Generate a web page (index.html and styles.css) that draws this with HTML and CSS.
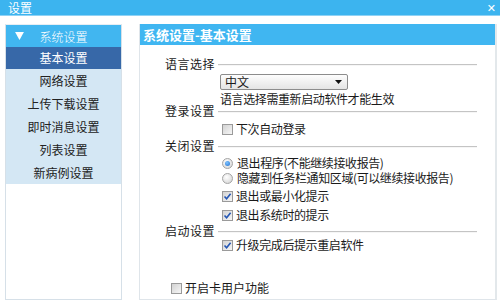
FILE: index.html
```html
<!DOCTYPE html>
<html>
  <head>
    <meta charset="utf-8" />
    <link rel="stylesheet" href="styles.css">
  </head>
  <body>
    <div class="titlebar">
      <div class="title">设置</div>
      <div class="close">✕</div>
    </div>

    <div class="main">
      <div class="sidebar">
        <div class="side-head">
          <span class="tri">
            <svg viewBox="0 0 10 9"><path d="M0 0H10L5 9Z" fill="#fff" /></svg>
          </span>
          <span class="side-title">系统设置</span>
        </div>
        <ul class="menu">
          <li class="active">基本设置</li>
          <li>网络设置</li>
          <li>上传下载设置</li>
          <li>即时消息设置</li>
          <li>列表设置</li>
          <li>新病例设置</li>
        </ul>
      </div>

      <div class="panel">
        <div class="panel-head">系统设置-基本设置</div>
        <div class="panel-body">
          <div class="legend l-lang"><span>语言选择</span><i class="rule"></i></div>
          <div class="items">
            <div class="select">
              <span>中文</span>
              <svg class="caret" viewBox="0 0 7 4"><path d="M0 0H7L3.5 4Z" fill="#111" /></svg>
            </div>
            <div class="note">语言选择需重新启动软件才能生效</div>
          </div>

          <div class="legend l-login"><span>登录设置</span><i class="rule"></i></div>
          <div class="items">
            <div class="opt o-login"><span class="box"></span>下次自动登录</div>
          </div>

          <div class="legend l-close"><span>关闭设置</span><i class="rule"></i></div>
          <div class="items">
            <div class="opt o-r1"><span class="radio on"></span>退出程序(不能继续接收报告)</div>
            <div class="opt o-r2"><span class="radio"></span>隐藏到任务栏通知区域(可以继续接收报告)</div>
            <div class="opt o-c1">
              <span class="box"><svg viewBox="0 0 9 9"><path d="M1.5 4.5L3.6 6.8L7.6 1.8" /></svg></span>退出或最小化提示
            </div>
            <div class="opt o-c2">
              <span class="box"><svg viewBox="0 0 9 9"><path d="M1.5 4.5L3.6 6.8L7.6 1.8" /></svg></span>退出系统时的提示
            </div>
          </div>

          <div class="legend l-start"><span>启动设置</span><i class="rule"></i></div>
          <div class="items">
            <div class="opt o-start">
              <span class="box"><svg viewBox="0 0 9 9"><path d="M1.5 4.5L3.6 6.8L7.6 1.8" /></svg></span>升级完成后提示重启软件
            </div>
          </div>

          <div class="opt o-card"><span class="box"></span>开启卡用户功能</div>
        </div>
      </div>
    </div>
  </body>
</html>
```

FILE: styles.css
```css
* {
  margin: 0;
  padding: 0;
  box-sizing: border-box;
}

body {
  width: 500px;
  height: 300px;
  overflow: hidden;
  background: #fff;
  font-family: "Noto Sans CJK SC", "DejaVu Sans", sans-serif;
  font-size: 12px;
  color: #1a1a1a;
}

.titlebar {
  height: 16px;
  background: #3cb4ef;
  border-bottom: 1px solid #8fd2f5;
  display: flex;
  justify-content: space-between;
  align-items: center;
  padding: 0 4px 0 8px;
  color: #fff;
}

.title {
  font-size: 12px;
  line-height: 15px;
}

.close {
  font-size: 11px;
  font-weight: bold;
  line-height: 15px;
}

.main {
  display: flex;
  gap: 17px;
  padding: 8px 3px 0 5px;
  height: 284px;
}

/* left menu */
.sidebar {
  width: 117px;
  border: 1px solid #d6e0e8;
  border-top-color: #e6eef4;
  background: #fff;
}

.side-head {
  height: 22px;
  background: #41b6f0;
  color: #fff;
  display: flex;
  align-items: center;
  justify-content: center;
  position: relative;
}

.tri {
  position: absolute;
  left: 9px;
  top: 7px;
  width: 9px;
  height: 8px;
  display: flex;
}

.tri svg {
  width: 9px;
  height: 8px;
}

.side-title {
  font-size: 12px;
  font-weight: 300;
}

.menu {
  list-style: none;
  background: #d4e7f4;
}

.menu li {
  height: 23px;
  line-height: 23px;
  text-align: center;
  color: #222;
}

.menu li.active {
  height: 22px;
  line-height: 22px;
  background: #3768a8;
  color: #fff;
}

/* right panel */
.panel {
  flex: 1;
  border: 1px solid #dfe5ea;
  border-right: 2px solid #e3e8eb;
  border-top: none;
}

.panel-head {
  height: 21px;
  line-height: 21px;
  background: #40b6f1;
  color: #fff;
  font-size: 13px;
  font-weight: bold;
  padding-left: 3px;
}

.panel-body {
  padding: 12px 18px 0 25px;
}

.legend {
  display: flex;
  align-items: center;
  height: 14px;
  line-height: 14px;
}

.legend span {
  width: 53px;
  letter-spacing: 0.5px;
}

.rule {
  flex: 1;
  height: 2px;
  border-top: 1px solid #c4c4c4;
  border-bottom: 1px solid #f6f6f6;
  margin-top: 2px;
}

.items {
  padding-left: 55px;
  letter-spacing: -0.4px;
}

.select {
  margin-top: 3px;
  width: 128px;
  height: 16px;
  border: 1px solid #8c8c8c;
  border-radius: 2px;
  background: linear-gradient(#fdfdfd, #e4e4e4);
  display: flex;
  align-items: center;
  justify-content: space-between;
  padding: 0 5px 0 4px;
  line-height: 14px;
  letter-spacing: 0;
}

.caret {
  width: 7px;
  height: 4px;
}

.note {
  margin-top: 3px;
  line-height: 12px;
}

.opt {
  display: flex;
  align-items: center;
  height: 14px;
  line-height: 14px;
  padding-left: 2px;
}

.box {
  width: 11px;
  height: 11px;
  border: 1px solid #9a9a9a;
  background: linear-gradient(135deg, #d2d2d2, #f6f6f6);
  margin-right: 3px;
  display: flex;
  align-items: center;
  justify-content: center;
}

.box svg {
  width: 9px;
  height: 9px;
  fill: none;
  stroke: #2456b4;
  stroke-width: 1.6;
}

.radio {
  width: 11px;
  height: 11px;
  border-radius: 50%;
  border: 1px solid #a4a4a4;
  background: radial-gradient(circle at 40% 35%, #fff, #d0d0d0);
  margin-right: 4px;
  display: flex;
  align-items: center;
  justify-content: center;
}

.radio.on::after {
  content: "";
  width: 5px;
  height: 5px;
  border-radius: 50%;
  background: radial-gradient(circle at 40% 35%, #7fc4ff, #1f6fd0);
}

.l-login { margin-top: -1px; }
.o-login { margin-top: 4px; }
.l-close { margin-top: 3px; }
.o-r1 { margin-top: 3px; }
.o-r2 { margin-top: 1px; }
.o-c1 { margin-top: 4px; }
.o-c2 { margin-top: 5px; }
.l-start { margin-top: 2px; }
.o-start { margin-top: 0; }

.o-card {
  margin-top: 29px;
  padding-left: 6px;
}
```
